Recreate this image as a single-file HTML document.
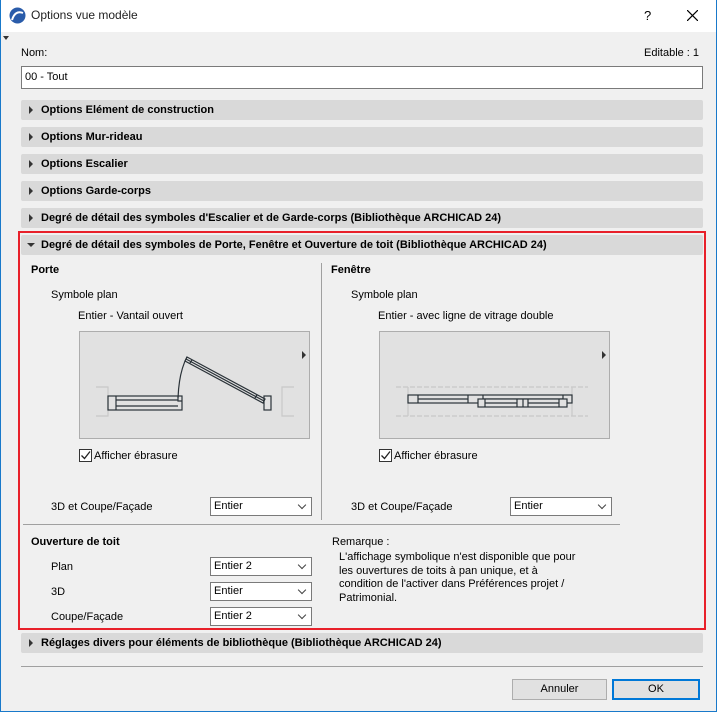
<!DOCTYPE html>
<html><head><meta charset="utf-8"><style>
*{margin:0;padding:0;box-sizing:border-box}
body{width:717px;height:712px;background:#f0f0f0;font-family:"Liberation Sans",sans-serif;font-size:11px;color:#000;position:relative;overflow:hidden}
.a{position:absolute;white-space:nowrap}
.bar{position:absolute;left:21px;width:682px;height:20px;background:#d9d9d9;border-radius:2px;font-weight:bold;line-height:20px;padding-left:20px}
.bar:before{content:"";position:absolute;left:8px;top:6px;border-left:4px solid #333;border-top:4px solid transparent;border-bottom:4px solid transparent}
.bar.open:before{left:6px;top:8px;border-top:4px solid #333;border-left:4px solid transparent;border-right:4px solid transparent;border-bottom:0}
.sel{position:absolute;width:102px;height:19px;background:#fff;border:1px solid #7a7a7a;line-height:17px;padding-left:3px}
.sel:after{content:"";position:absolute;right:6px;top:4px;width:5px;height:5px;border-right:1px solid #444;border-bottom:1px solid #444;transform:rotate(45deg)}
.prev{position:absolute;width:231px;height:108px;background:#e1e1e1;border:1px solid #adadad}
.prev .tri{position:absolute;left:222px;top:19px;border-left:4px solid #333;border-top:4px solid transparent;border-bottom:4px solid transparent}
.cb{position:absolute;width:13px;height:13px;border:1px solid #333;background:#fff}
.btn{position:absolute;height:21px;background:#e1e1e1;border:1px solid #adadad;text-align:center;line-height:19px}
</style></head><body>
<div class="a" style="left:0;top:0;width:717px;height:32px;background:#fff"></div>
<div class="a" style="left:0;top:0;width:1px;height:712px;background:#1979ca"></div>
<div class="a" style="left:716px;top:0;width:1px;height:712px;background:#1979ca"></div>
<div class="a" style="left:0;top:711px;width:717px;height:1px;background:#1979ca"></div>
<svg class="a" style="left:9px;top:7px" width="17" height="17" viewBox="0 0 17 17"><circle cx="8.5" cy="8.5" r="8" fill="#2a5caa"/><path d="M3 13 Q6 3 14 6" stroke="#fff" stroke-width="2" fill="none"/></svg>
<div class="a" style="left:31px;top:8px;font-size:12px;color:#222">Options vue modèle</div>
<div class="a" style="left:644px;top:8px;font-size:13px">?</div>
<svg class="a" style="left:687px;top:10px" width="11" height="11"><path d="M0 0L11 11M11 0L0 11" stroke="#000" stroke-width="1.2"/></svg>
<div class="a" style="left:3px;top:36px;border-top:4px solid #333;border-left:3px solid transparent;border-right:3px solid transparent"></div>
<div class="a" style="left:21px;top:47px">Nom:</div>
<div class="a" style="left:644px;top:47px">Editable : 1</div>
<div class="a" style="left:21px;top:66px;width:682px;height:23px;background:#fff;border:1px solid #7a7a7a;padding:4px 3px">00 - Tout</div>
<div class="bar" style="top:100px">Options Elément de construction</div>
<div class="bar" style="top:127px">Options Mur-rideau</div>
<div class="bar" style="top:154px">Options Escalier</div>
<div class="bar" style="top:181px">Options Garde-corps</div>
<div class="bar" style="top:208px">Degré de détail des symboles d'Escalier et de Garde-corps (Bibliothèque ARCHICAD 24)</div>
<div class="a" style="left:18px;top:231px;width:688px;height:399px;border:2px solid #e8202a"></div>
<div class="bar open" style="top:235px">Degré de détail des symboles de Porte, Fenêtre et Ouverture de toit (Bibliothèque ARCHICAD 24)</div>
<div class="a" style="left:31px;top:264px;font-weight:bold">Porte</div>
<div class="a" style="left:51px;top:289px">Symbole plan</div>
<div class="a" style="left:78px;top:310px">Entier - Vantail ouvert</div>
<div class="prev" style="left:79px;top:331px"><div class="tri"></div>
<svg width="230" height="107" style="position:absolute;left:0;top:0" fill="none" stroke="#2a3238" stroke-width="1.2">
<path d="M16 55H28V84H16M214 55H202V84H214" stroke="#c8c8c8"/>
<rect x="28" y="64" width="74" height="14"/><path d="M36 64V78M36 68H98M36 74H98"/>
<path d="M98 64V69H102"/>
<path d="M98 66Q99 40 107 25"/>
<path d="M107 25L185 67L183 71L105 29Z"/><path d="M106 27L184 69M112 28L110 31M177 63L175 66"/>
<rect x="184" y="64" width="7" height="14"/>
</svg></div>
<div class="cb" style="left:79px;top:449px"><svg width="11" height="11" style="position:absolute;left:0;top:0"><path d="M1.5 5.5L4.5 8.5L10 1.5" stroke="#222" stroke-width="1.3" fill="none"/></svg></div>
<div class="a" style="left:94px;top:450px">Afficher ébrasure</div>
<div class="a" style="left:51px;top:501px">3D et Coupe/Façade</div>
<div class="sel" style="left:210px;top:497px">Entier</div>
<div class="a" style="left:321px;top:263px;width:1px;height:257px;background:#a0a0a0"></div>
<div class="a" style="left:331px;top:264px;font-weight:bold">Fenêtre</div>
<div class="a" style="left:351px;top:289px">Symbole plan</div>
<div class="a" style="left:378px;top:310px">Entier - avec ligne de vitrage double</div>
<div class="prev" style="left:379px;top:331px"><div class="tri"></div>
<svg width="230" height="107" style="position:absolute;left:0;top:0" fill="none" stroke="#2a3238" stroke-width="1.2">
<path d="M16 55H208M16 84H208" stroke="#c8c8c8" stroke-dasharray="5 2"/><path d="M28 55V84M192 55V84" stroke="#c8c8c8"/>
<rect x="28" y="63" width="164" height="8"/><path d="M38 63V71M88 63V71M103 63V67M183 63V71M38 67H88M103 67H183"/>
<rect x="98" y="67" width="89" height="8" fill="#e1e1e1"/><path d="M105 67V75M137 67V75M143 67V75M148 67V75M179 67V75M105 71H137M148 71H179"/>
</svg></div>
<div class="cb" style="left:379px;top:449px"><svg width="11" height="11" style="position:absolute;left:0;top:0"><path d="M1.5 5.5L4.5 8.5L10 1.5" stroke="#222" stroke-width="1.3" fill="none"/></svg></div>
<div class="a" style="left:394px;top:450px">Afficher ébrasure</div>
<div class="a" style="left:351px;top:501px">3D et Coupe/Façade</div>
<div class="sel" style="left:510px;top:497px">Entier</div>
<div class="a" style="left:23px;top:524px;width:597px;height:1px;background:#a0a0a0"></div>
<div class="a" style="left:31px;top:536px;font-weight:bold">Ouverture de toit</div>
<div class="a" style="left:51px;top:561px">Plan</div>
<div class="a" style="left:51px;top:586px">3D</div>
<div class="a" style="left:51px;top:611px">Coupe/Façade</div>
<div class="sel" style="left:210px;top:557px">Entier 2</div>
<div class="sel" style="left:210px;top:582px">Entier</div>
<div class="sel" style="left:210px;top:607px">Entier 2</div>
<div class="a" style="left:332px;top:536px">Remarque :</div>
<div class="a" style="left:339px;top:551px;line-height:13.5px">L'affichage symbolique n'est disponible que pour<br>les ouvertures de toits à pan unique, et à<br>condition de l'activer dans Préférences projet /<br>Patrimonial.</div>
<div class="bar" style="top:633px">Réglages divers pour éléments de bibliothèque (Bibliothèque ARCHICAD 24)</div>
<div class="a" style="left:21px;top:666px;width:682px;height:1px;background:#a0a0a0"></div>
<div class="btn" style="left:512px;top:679px;width:95px">Annuler</div>
<div class="btn" style="left:612px;top:679px;width:88px;border:2px solid #0078d7;line-height:17px">OK</div>
</body></html>
